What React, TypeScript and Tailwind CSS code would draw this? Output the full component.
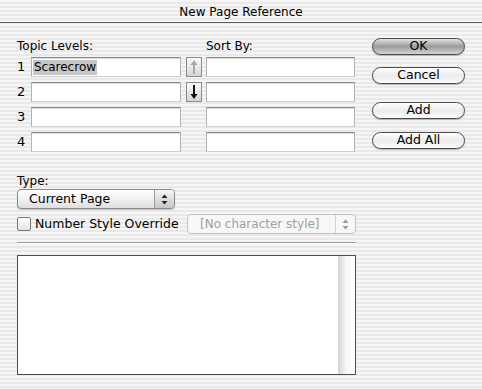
import React from 'react';

const font = { fontFamily: '"DejaVu Sans", "Liberation Sans", sans-serif' };

function Field({ children }: { children?: React.ReactNode }) {
  return (
    <div className="flex h-[20px] items-center border border-t-[#8a8a8a] border-x-[#b2b2b2] border-b-[#cfcfcf] bg-white pl-[1px] shadow-[inset_0_1px_0_#dcdcdc]">
      {children}
    </div>
  );
}

function ArrowButton({ dir }: { dir: 'up' | 'down' }) {
  const color = dir === 'up' ? '#a9a9a9' : '#111111';
  return (
    <div className="flex h-[20px] w-[16px] items-center justify-center border border-[#8a8a8a] bg-gradient-to-b from-[#fbfbfb] to-[#d6d6d6]">
      <svg width="8" height="16" viewBox="0 0 8 16">
        {dir === 'up' ? (
          <>
            <rect x="3" y="4" width="2" height="11" fill={color} />
            <path d="M4 1 L7.5 6 L0.5 6 Z" fill={color} />
          </>
        ) : (
          <>
            <rect x="3" y="1" width="2" height="11" fill={color} />
            <path d="M4 15 L7.5 10 L0.5 10 Z" fill={color} />
          </>
        )}
      </svg>
    </div>
  );
}

function PillButton({ label, primary }: { label: string; primary?: boolean }) {
  return (
    <div
      className={
        'flex h-[17px] w-[93px] items-center justify-center rounded-full border border-[#4a4a4a] text-[12.5px] text-black shadow-[0_1px_1px_rgba(0,0,0,0.25)] ' +
        (primary
          ? 'bg-gradient-to-b from-[#e2e2e2] via-[#9c9c9c] to-[#d4d4d4]'
          : 'bg-gradient-to-b from-white via-[#ececec] to-[#fbfbfb]')
      }
    >
      {label}
    </div>
  );
}

function Stepper({ disabled }: { disabled?: boolean }) {
  const c = disabled ? '#9a9a9a' : '#222222';
  return (
    <svg width="7" height="11" viewBox="0 0 7 11">
      <path d="M3.5 0.5 L6.5 4 L0.5 4 Z" fill={c} />
      <path d="M3.5 10.5 L6.5 7 L0.5 7 Z" fill={c} />
    </svg>
  );
}

export default function App() {
  const levels = ['1', '2', '3', '4'];
  return (
    <div
      style={font}
      className="h-[389px] w-[482px] overflow-hidden bg-[image:repeating-linear-gradient(180deg,#f5f5f5_0px,#f5f5f5_2px,#e9e9e9_2px,#e9e9e9_4px)] text-[12px] text-black"
    >
      {/* Title bar */}
      <div className="flex h-[23px] items-center justify-center border-b border-[#5e5e5e] pt-[1px] text-[12px]">
        New Page Reference
      </div>

      <div className="flex">
        {/* Left column */}
        <div className="ml-[17px] w-[339px]">
          <div className="mt-[15px] flex h-[17px] items-end">
            <div className="w-[189px]">Topic Levels:</div>
            <div>Sort By:</div>
          </div>

          <div className="mt-[2px] flex flex-col gap-[5px]">
            {levels.map((n, i) => (
              <div key={n} className="flex h-[20px] items-center">
                <div className="w-[14px] text-[13px] leading-[20px]">{n}</div>
                <div className="w-[150px]">
                  <Field>
                    {i === 0 && <span className="bg-[#c6c6c6] px-[1px] leading-[15px]">Scarecrow</span>}
                  </Field>
                </div>
                <div className="ml-[5px] w-[16px]">
                  {i === 0 ? <ArrowButton dir="up" /> : i === 1 ? <ArrowButton dir="down" /> : null}
                </div>
                <div className="ml-[4px] w-[149px]">
                  <Field />
                </div>
              </div>
            ))}
          </div>

          <div className="mt-[22px] leading-[15px]">Type:</div>
          <div className="flex h-[20px] w-[158px] overflow-hidden rounded-[4px] border border-[#8a8a8a] bg-gradient-to-b from-white via-[#f2f2f2] to-[#dedede] shadow-[0_1px_1px_rgba(0,0,0,0.2)]">
            <div className="flex-1 pl-[11px] text-[12.5px] leading-[18px]">Current Page</div>
            <div className="flex w-[20px] items-center justify-center border-l border-[#9a9a9a] bg-gradient-to-b from-[#f6f6f6] to-[#c6c6c6]">
              <Stepper />
            </div>
          </div>

          <div className="mt-[5px] flex h-[20px] items-center">
            <div className="h-[14px] w-[14px] rounded-[2px] border border-[#7a7a7a] bg-gradient-to-b from-white to-[#e4e4e4]" />
            <div className="ml-[4px] w-[152px] text-[12.5px]">Number Style Override</div>
            <div className="flex h-[20px] w-[169px] items-center rounded-[4px] border border-[#c2c2c2] bg-[#f7f7f7]">
              <div className="flex-1 pl-[12px] text-[#a0a0a0]">[No character style]</div>
              <div className="flex h-full w-[20px] items-center justify-center border-l border-[#d4d4d4]">
                <Stepper disabled />
              </div>
            </div>
          </div>

          <div className="mt-[8px] h-[2px] border-t border-b border-t-[#9c9c9c] border-b-white" />

          <div className="mt-[11px] flex h-[120px] border border-[#4e4e4e] bg-white">
            <div className="flex-1" />
            <div className="w-[17px] bg-gradient-to-r from-[#d2d2d2] via-[#f8f8f8] to-[#fdfdfd]" />
          </div>
        </div>

        {/* Right column */}
        <div className="ml-[16px] mt-[15px] flex flex-col">
          <PillButton label="OK" primary />
          <div className="mt-[12px]">
            <PillButton label="Cancel" />
          </div>
          <div className="mt-[18px]">
            <PillButton label="Add" />
          </div>
          <div className="mt-[13px]">
            <PillButton label="Add All" />
          </div>
        </div>
      </div>
    </div>
  );
}
